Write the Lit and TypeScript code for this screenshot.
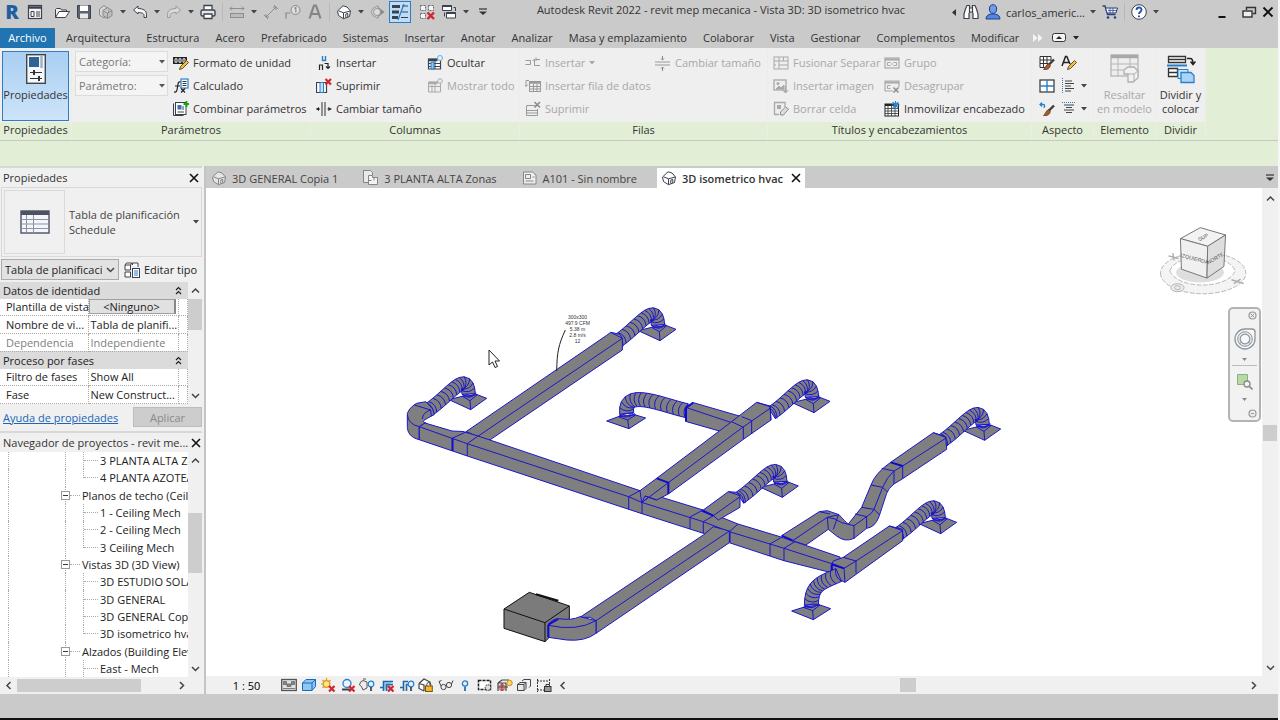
import { LitElement, html, svg, css, nothing } from "lit";
import { customElement } from "lit/decorators.js";
import { classMap } from "lit/directives/class-map.js";

/* ---------- icon set (16 x 16 grid) ---------- */
const K = "#3c424d";
const G = "#a9a9a9";
const B = "#2a7fc9";

const houseIcon = (c: string, f: string) => svg`<path d="M1.5 7 7 1.8l4 1.2 3.5 4-1 5.5-6 2.2-5-3.2z" fill=${f} stroke=${c}/><path d="M2.5 6.8 7.5 8.8 14.2 7M7.5 8.8v5.6M9.8 13.6V10l2-.6v3.6" fill="none" stroke=${c}/>`;
const cross = svg`<path d="m9 9 5.5 5.5M14.5 9 9 14.5" stroke="#d0262c" stroke-width="2.2" fill="none"/>`;
const bulb = svg`<circle cx="12" cy="7" r="2.8" fill="#dff0ff" stroke=${B} stroke-width="1.2"/><path d="M12 10v4" stroke="#333" stroke-width="1.6"/>`;
const brush = svg`<path d="M15 4.5 9.5 10" stroke="#3d3d3d" stroke-width="2.4"/><path d="M9.8 8.6 11.4 10.4C11 13.5 8.5 15 4.5 14.5 6.8 13 6.5 9.5 9.8 8.6z" fill="#a65f2c" stroke="#5d3213" stroke-width=".7"/>`;
const pencil = svg`<path d="m6.5 14.5 1-3 6-6 2 2-6 6z" fill="#f1bd45" stroke="#5a4210" stroke-width=".9"/>`;

const ICONS: Record<string, unknown> = {
  home: svg`<rect x="1.5" y="1.5" width="13" height="13" fill="#f4f4f4" stroke=${K} stroke-width="1.2"/><path d="M1.5 3.500h13" stroke=${K} stroke-width="2.500"/><path d="M4 7.500h3v5H4zM9 8h4M9 10h4M9 12h4" fill="none" stroke=${K}/>`,
  open: svg`<path d="M1.5 13.5v-8l1-1h4l1 1.500h5v2" fill="#f2f2f2" stroke=${K}/><path d="M1.5 13.5 5 7.500h10.500l-4 6z" fill="#fff" stroke=${K}/>`,
  save: svg`<path d="M1.5 1.5h13v13h-12l-1-1z" fill="#5a6270" stroke=${K}/><rect x="4" y="1.5" width="8" height="5.500" fill="#fff"/><rect x="4" y="9.500" width="8" height="5" fill="#e8e8e8"/>`,
  cloud: svg`<path d="M1.500 5 6 1.500 10.500 5v6L6 14 1.500 11z" fill="#d6d6d6" stroke="#8a8a8a"/><path d="M5 6.500 9.500 3.500 14 6.500v5l-4.500 3-4.500-3zM5 6.500l4.500 2.500L14 6.500M9.500 9v5.500" fill="#bdbdbd" stroke="#8a8a8a"/>`,
  undo: svg`<path d="M1.500 6 6 2v2.500c5 0 8.500 2 8.500 6v3h-2.500v-2c0-2-2-3-6-3V10z" fill="#f5f5f5" stroke=${K}/>`,
  redo: svg`<path d="M14.500 6 10 2v2.500c-5 0-8.500 2-8.500 6v3H4v-2c0-2 2-3 6-3V10z" fill="#d9d9d9" stroke="#9a9a9a"/>`,
  print: svg`<path d="M4 6V1.500h8V6" fill="#fff" stroke=${K} stroke-width="1.300"/><rect x="1" y="6" width="14" height="6" rx="1.500" fill="#e6e6e6" stroke=${K} stroke-width="1.400"/><path d="M4 10h8v4.500H4z" fill="#fff" stroke=${K} stroke-width="1.300"/>`,
  measure: svg`<path d="M1 4.500h14M3 2.500l-2 2 2 2M13 2.500l2 2-2 2" fill="none" stroke="#8d8d8d"/><rect x="1.500" y="9.500" width="13" height="4" fill="#bcbcbc" stroke="#8d8d8d"/>`,
  dim: svg`<path d="M3 13 13 3M1 11l4 4M11 1l4 4M3 10v3h3M10 3h3v3" fill="none" stroke="#8f8f8f"/>`,
  tag: svg`<circle cx="10.500" cy="6" r="4.500" fill="#ddd" stroke="#8a8a8a"/><path d="M10.800 8.500v-5L9.500 4.500M1 14.500V9h4.500" fill="none" stroke="#8a8a8a" stroke-width="1.200"/>`,
  text: svg`<path d="M2.500 14.500 7 1.500h2l4.500 13M4.500 10h7" fill="none" stroke="#858585" stroke-width="2.200"/>`,
  house: houseIcon(K, "#fff"),
  houseGray: houseIcon("#858585", "#e6e6e6"),
  section: svg`<path d="M3 4.500 8 1.500v13L3 11.500 1 8z" fill="#d2d2d2" stroke="#9a9a9a"/><path d="M8 3 14.500 8 8 13z" fill="#858585"/><circle cx="7" cy="8" r="3.500" fill="#dcdcdc" stroke="#9a9a9a"/>`,
  thin: svg`<path d="M0 2.500h8M0 8h7M0 13.500h6" stroke=${K} stroke-width="3"/><path d="M10 2h6M9.500 8h6.500M9 13.500h7" stroke=${K} stroke-width="1"/><path d="M12 0 6 16" stroke=${B} stroke-width="1.300"/>`,
  closeHidden: svg`<path d="M1.500 1.500h5v5h-5zM9.500 1.500h5v5h-5zM1.500 9.500h5v5h-5z" fill="#f4f4f4" stroke="#6a6a6a" stroke-dasharray="2 1"/><path d="m8.500 8.500 6.500 6.500M15 8.500 8.500 15" stroke="#d0262c" stroke-width="2.400"/>`,
  switch: svg`<path d="M1.500 1.500h9v5h-9z" fill="#fff" stroke=${K}/><path d="M1.500 2h9" stroke=${K} stroke-width="2"/><path d="M5.500 8.500h9v5.500h-9z" fill="#fff" stroke=${K}/><path d="M5.500 9h9" stroke=${K} stroke-width="2"/><path d="M12.500 3.500h2V7M3.500 8.500v4" fill="none" stroke=${K}/>`,
  binoc: svg`<path d="M2.500 5 4 1.500h2.500V9M13.500 5 12 1.500H9.500V9M6.500 4h3v4h-3z" fill="#fff" stroke=${K} stroke-width="1.200"/><path d="M2.500 5 1 10v4.500h5V9M13.500 5 15 10v4.500h-5V9" fill="#fff" stroke=${K} stroke-width="1.200"/>`,
  user: svg`<ellipse cx="8" cy="5" rx="3.600" ry="4.300" fill="#6e9be6" stroke="#1e3f93"/><path d="M1 15c0-3 2-4.500 5-5h4c3 .5 5 2 5 5z" fill="#5486dd" stroke="#1e3f93"/>`,
  cart: svg`<path d="M.5 2h2.500l2.500 8.500h8" fill="none" stroke="#2c3f7a" stroke-width="1.300"/><path d="M3.500 4h12l-1.500 5H5z" fill="#eef2fb" stroke="#2c3f7a"/><path d="M6 6.500h9M8 4v5M11 4v5" stroke="#2c3f7a" stroke-width=".7"/><circle cx="6" cy="13.500" r="1.300" fill="#2c3f7a"/><circle cx="13" cy="13.500" r="1.300" fill="#2c3f7a"/>`,
  help: svg`<circle cx="8" cy="8" r="7.300" fill="#fff" stroke=${K}/><path d="M5.500 6c0-3.300 5-3.300 5-.3C10.500 8 8 7.800 8 10M8 11.500v1.800" fill="none" stroke="#2450b8" stroke-width="1.900"/>`,
  min: svg`<path d="M4.500 13h7" stroke="#111" stroke-width="2"/>`,
  restore: svg`<path d="M5.500 6V3.500h9v6H12" fill="none" stroke="#333" stroke-width="1.400"/><rect x="2" y="7" width="9" height="6" fill="#eee" stroke="#333" stroke-width="1.400"/>`,
  close: svg`<path d="m4 4 8 8M12 4l-8 8" stroke="#111" stroke-width="1.600"/>`,
  closeWin: svg`<path d="m3.500 3.500 9 9M12.500 3.500l-9 9" stroke="#111" stroke-width="1.900"/>`,
  unit: svg`<rect x="0" y="2" width="14" height="7" fill="#222"/><path d="M2 3.800h2v3.400H2zM6 3.800h2v3.400H6zM10 3.800h2v3.400h-2z" fill="none" stroke="#fff" stroke-width=".9"/>${pencil}`,
  calc: svg`<rect x="8" y="1" width="7" height="9" fill="#fff" stroke=${B} stroke-width="1.200"/><path d="M9.500 3.500h4M9.500 5.500h4M9.500 7.500h4" stroke="#234" stroke-width="1"/><path d="M7.500 4C5 3 5 6 4.500 9c-.5 4-1 5.500-3.500 5M2 8h5M8 10.500l4 4M12 10.500l-4 4" fill="none" stroke="#222" stroke-width="1.200"/>`,
  combine: svg`<path d="M.5 2.500v12h10" fill="none" stroke=${K}/><rect x="2.500" y="1.500" width="10.500" height="12" fill="#fff" stroke=${K}/><rect x="4.500" y="4" width="4" height="4.500" fill="#3d6fae"/><path d="M4.500 11h6.500M10 5v4" stroke=${K}/><path d="M13.500 0v6M10.500 3h6" stroke="#1aa01a" stroke-width="1.800"/>`,
  colIns: svg`<path d="M6.500 1v4.500h3V1" fill="none" stroke=${B} stroke-width="1.400"/><path d="M3.500 15v-5h3v5M8.500 8.500H12V13M10 11.500l2 2 2-2" fill="none" stroke="#222" stroke-width="1.200"/>`,
  colDel: svg`<path d="M.5 4.500h10v10H.5z" fill="#fff" stroke=${K} stroke-width="1.200"/><path d="M4 4.500h3.500v10H4z" fill="#bfe0fa" stroke=${B}/><path d="m9.500 1 5.500 5.500M15 1 9.500 6.500" stroke="#d0262c" stroke-width="2.200"/>`,
  colSize: svg`<path d="M6 1v14M9 1v14" stroke="#444" stroke-width="1.100"/><path d="M0 8h4M15.500 8h-4M3 6.500 1 8l2 1.500M12.500 6.500l2 1.500-2 1.500" stroke="#222" fill="#222"/>`,
  hide: svg`<path d="M1.500 4h12v10h-12z" fill="#fff" stroke=${K} stroke-width="1.200"/><path d="M1.500 5h9" stroke=${K} stroke-width="2.500"/><path d="M1.500 8.500h12M1.500 11.500h12M8 6v8" stroke=${K}/><path d="M4 7h3v7H4z" fill="#8cc3ef" stroke=${B}/><circle cx="13" cy="3" r="2.500" fill="#e4f2fd" stroke="#6aaade"/>`,
  show: svg`<path d="M1.500 4h12v10h-12z" fill="#eee" stroke=${G}/><path d="M1.500 5h9" stroke=${G} stroke-width="2.500"/><path d="M1.500 8.500h12M8 6v8M5 7v7" stroke=${G}/><circle cx="13" cy="3" r="2.300" fill="#eee" stroke=${G}/>`,
  rowIns: svg`<path d="M.5 5.500h5v4h-5M15 4.500h-4v-2M15 10.500H9.500v-6M7.500 6 9.500 4l2 2" fill="none" stroke="#999"/>`,
  rowData: svg`<rect x="4.500" y="3.500" width="11" height="10" fill="#eee" stroke="#999"/><path d="M4.500 4.500h11" stroke="#999" stroke-width="2.500"/><path d="M4.500 8.500h11M4.500 11h11M8.500 6v8M12 6v8M4 2.500H1V8M-.5 6.500 1 8.500l2-2" fill="none" stroke="#999"/>`,
  rowDel: svg`<path d="M1.500 4.500h9M1.500 4.500v10h11V8M1.500 9.500h11M1.500 12h11" fill="none" stroke="#999"/><path d="m9.500 1 5.500 5.500M15 1 9.500 6.500" stroke="#8a8a8a" stroke-width="1.600"/>`,
  rowSize: svg`<path d="M0 7h15M0 10h15" stroke="#999" stroke-width="1.200"/><path d="M7.500 1v4M7.500 16v-4M6 3.500 7.500 5 9 3.500M6 13.500l1.500-1.500 1.500 1.500" stroke="#888" fill="none"/>`,
  merge: svg`<rect x="1" y="2" width="14" height="12" fill="#eee" stroke=${G}/><path d="M1 6h14M6 2v12M6 10h9M10.500 2v4M1 10h2" stroke=${G} fill="none"/>`,
  image: svg`<rect x="1" y="2" width="12" height="10" fill="#eee" stroke=${G} stroke-width="1.300"/><circle cx="5" cy="5.500" r="1.500" fill=${G}/><path d="m3 11 3-3 2 2 3-3v4zM12.500 8v6.500M10 12.500l2.500 2.500 2.500-2.500" fill=${G} stroke=${G}/>`,
  erase: svg`<path d="M12 6V1.500H1.500v12H6" fill="#eee" stroke=${G} stroke-width="1.300"/><path d="M4 4h4v4H4z" fill=${G}/><path d="m7.500 11 5-5 3 2-5 6H7.500z" fill="#ddd" stroke="#8e8e8e"/>`,
  group: svg`<rect x="1" y="3" width="14" height="10" fill="#eee" stroke=${G} stroke-width="1.200"/><path d="M1 4.500h14" stroke=${G} stroke-width="2"/><path d="M6.500 7.500h-3v3h3M9.500 7.500h3v3h-3M7 9h2" fill="none" stroke=${G}/>`,
  ungroup: svg`<path d="M9 13H1V3h14v6" fill="#eee" stroke=${G} stroke-width="1.200"/><path d="M1 4.500h14" stroke=${G} stroke-width="2"/><path d="M6.500 7.500h-3v3h3" fill="none" stroke=${G}/><path d="m9.500 9.500 5 5M14.500 9.500l-5 5" stroke="#8e8e8e" stroke-width="1.600"/>`,
  freeze: svg`<rect x="1" y="3" width="13.500" height="12" fill="#fff" stroke="#222"/><path d="M1 4h9" stroke="#222" stroke-width="2"/><path d="M1 7.500h13M1 10h13M1 12.500h13M4 5v10M7.500 5v10M11 5v10" stroke="#444" stroke-width=".9"/><path d="M11.500 0v8M7.500 4h8M8.700 1.200l5.600 5.600M14.300 1.200 8.700 6.800" stroke=${B} stroke-width="1.200"/>`,
  shade: svg`<path d="M12 6V1.500H1v11h5" fill="#fff" stroke="#333"/><path d="M1 5h11M1 8.500h8M4.500 1.500v11M8 1.500V9" stroke="#333"/>${brush}`,
  font: svg`<path d="M1 11 4.500 1.500h1.300L9 9M2.500 7.500h5.500" fill="none" stroke="#222" stroke-width="1.500"/>${pencil}`,
  borders: svg`<rect x="1" y="2" width="14" height="12" fill="#fff" stroke="#333" stroke-width="1.200"/><path d="M8 2v12M1 8h14" stroke=${B} stroke-width="1.400"/>`,
  alignH: svg`<path d="M1.500 0v16" stroke=${B} stroke-dasharray="1 1"/><path d="M4 3h7M4 5.500h9M4 8h6M4 10.500h9M4 13h6" stroke="#444"/>`,
  alignV: svg`<path d="M1 1.500h14" stroke=${B} stroke-dasharray="1 1"/><path d="M3 4h10M5 6.500h6M3 9h10M5 11.500h6" stroke="#444"/>`,
  reset: svg`<path d="M1 3.500h3.500c1.500 0 1.500 3 0 3M3 1.500 1 3.500l2 2" fill="none" stroke=${B} stroke-width="1.300"/>${brush}`,
  editType: svg`<path d="M1 3h5.500v5H1zM1 10h5.500v5H1zM8.500 3V1H14v4M1 3l1.500-2H8l-1.500 2" fill="#fff" stroke=${K}/><rect x="8.500" y="6.500" width="7" height="9" fill="#fff" stroke=${K}/><path d="M10 9h4M10 11h4M10 13h4" stroke=${B}/>`,
  plan: svg`<path d="M5 12.500H.5v-12h7l2 2V5" fill="#e9e9e9" stroke="#858585"/><path d="M5.500 5.500h4v2h5v7h-9z" fill="#f3f3f3" stroke="#858585"/><path d="M5.500 10.500h3M11 7.500v3" stroke="#858585"/>`,
  sheet: svg`<path d="M1.500 2h9l3.500 3v9H1.500z" fill="#efefef" stroke="#858585"/><path d="M3.500 4.500h5v4h-5zM3.500 11h8M10.500 7h2" fill="none" stroke="#858585"/>`,
  scaleBox: svg`<rect x=".7" y="2.500" width="14.600" height="11" fill="#e2e2e2" stroke="#555" stroke-width="1.300"/><path d="M2.500 4.500h3v3h-3zM10.500 4.500h3v3h-3zM6 7h4v2.500H6zM2 11.500h12" fill="#888" stroke="#666" stroke-width=".8"/>`,
  cube: svg`<path d="M1.500 6 5 2.500h9.500v7L11 13.500H1.500z" fill="#8cc8f5" stroke="#1c69b5"/><path d="M1.500 6H11v7.500M11 6l3.500-3.500" fill="none" stroke="#1c69b5"/>`,
  sun: svg`<circle cx="6.500" cy="7" r="3.300" fill="#ffe28a" stroke="#d99a15" stroke-width="1.300"/><path d="M6.500 1v2M1 7h2M2.500 3l1.300 1.300M10.500 3 9.300 4.300M2.500 11l1.300-1.300" stroke="#d99a15" stroke-width="1.200"/>${cross}`,
  shadow: svg`<circle cx="7" cy="6.500" r="4" fill="#e9f4ff" stroke=${B} stroke-width="1.300"/><path d="M2 12.500h8" stroke="#345" stroke-width="2"/>${cross}`,
  render: svg`<path d="M1.500 5 4 3.500 8 5v6l-4 2-1.500-3.500L.5 8z" fill="#eee" stroke="#555"/><path d="M4 2h3" stroke="#555"/>${bulb}`,
  crop: svg`<path d="M4.500 14V4.500H14M1 10.500h3M7.500 14V7.500H14" fill="#a9d4f5" stroke="#2367a8" stroke-width="1.600"/>${cross}`,
  cropShow: svg`<path d="M4.500 14V4.500H9M1 10.500h3M7.500 14V7.500H9" fill="none" stroke="#2367a8" stroke-width="1.600"/>${bulb}`,
  lock: svg`<path d="M1 6.500 6 2l6 3v3M1 6.500v5l5 2.500M1 6.500l5 1.500v6" fill="#fff" stroke="#444" stroke-width="1.200"/><path d="M8.800 9V7.500a2 2 0 0 1 4 0V9" fill="none" stroke="#444"/><rect x="7.500" y="9" width="6.800" height="5.500" fill="#f4b62a" stroke="#7a5510"/>`,
  glasses: svg`<circle cx="5.500" cy="10" r="2.600" fill="#eee" stroke="#444"/><circle cx="11" cy="8" r="2.600" fill="#eee" stroke="#444"/><path d="M3 9 1 4.500l2.500-1M13.500 7 15 3.500" fill="none" stroke="#444"/>`,
  reveal: svg`<circle cx="8" cy="6.500" r="2.600" fill="#dff0ff" stroke=${B} stroke-width="1.300"/><path d="M8 9.500V14" stroke="#2e6bb0" stroke-width="1.800"/>`,
  temp: svg`<path d="M1.500 3.500h12v9h-12z" fill="#fff" stroke="#222" stroke-width="1.500" stroke-dasharray="3 1"/><circle cx="11" cy="10.500" r="2.800" fill="#ddd" stroke="#222" stroke-dasharray="1.500 1"/>`,
  analytic: svg`<path d="M1 6 5 3h7M1 6v8M1 10h10M5 6v8M9 6v8M1 6h8" fill="none" stroke="#444" stroke-width="1.200"/><path d="M3 8h4v5H3z" fill="none" stroke="#d0262c"/><circle cx="12.500" cy="6" r="2.700" fill="#ffd86b" stroke="#c98a12"/>`,
  displace: svg`<path d="M1.500 7.500 4 5.500h6v6L8 13.500H1.500zM1.500 7.500H8v6M8 7.500l2-2" fill="#e8e8e8" stroke="#444"/><path d="M6 4 8 2.500h6.500V9L13 10.500" fill="none" stroke="#444"/>`,
  constraint: svg`<path d="M1.500 2v13M1 4h12M13.500 2v5M1 13h7" fill="none" stroke="#333" stroke-dasharray="2 1"/><rect x="8.500" y="9.500" width="6.500" height="5" fill="#999" stroke="#333"/><path d="M10 9V7.500h3.500V9" fill="none" stroke="#333"/>`,
};

const icon = (name: string) => html`<svg class="ic" viewBox="0 0 16 16" width="16" height="16" aria-hidden="true">${ICONS[name]}</svg>`;
const caret = html`<svg class="caret" viewBox="0 0 6 4" width="6" height="4" aria-hidden="true"><path d="M0 0h6L3 3.500z" fill="currentColor"/></svg>`;
const CHEV: Record<string, string> = { up: "M1 6.500 4.500 3 8 6.500", down: "M1 3l3.500 3.500L8 3", left: "M6.500 1 3 4.500 6.500 8", right: "M3 1l3.500 3.500L3 8" };
const chev = (d: string) => html`<svg viewBox="0 0 9 9" width="9" height="9" aria-hidden="true"><path d=${CHEV[d]} fill="none" stroke="#444" stroke-width="1.500"/></svg>`;

/* ---------- duct geometry ---------- */
type Pt = [number, number];

/* Corrugated duct swept along a cubic curve. */
function flexDuct(p: [Pt, Pt, Pt, Pt], r: number, rings: number) {
  const left: Pt[] = [];
  const right: Pt[] = [];
  let ribs = "";
  for (let i = 0; i <= rings; i++) {
    const t = i / rings;
    const u = 1 - t;
    const at = (k: 0 | 1) => u * u * u * p[0][k] + 3 * u * u * t * p[1][k] + 3 * u * t * t * p[2][k] + t * t * t * p[3][k];
    const d = (k: 0 | 1) => 3 * u * u * (p[1][k] - p[0][k]) + 6 * u * t * (p[2][k] - p[1][k]) + 3 * t * t * (p[3][k] - p[2][k]);
    const len = Math.hypot(d(0), d(1));
    const tx = d(0) / len, ty = d(1) / len;
    const x = at(0), y = at(1);
    const a: Pt = [x - ty * r, y + tx * r];
    const b: Pt = [x + ty * r, y - tx * r];
    left.push(a);
    right.push(b);
    ribs += `M${a}Q${[x + tx * r * 0.7, y + ty * r * 0.7]} ${b}`;
  }
  return svg`<path class="duct" d=${"M" + [...left, ...right.reverse()].join("L") + "Z"}></path><path class="edge" d=${ribs}></path>`;
}

const diffuser = (l: Pt, b: Pt, r: Pt, a: Pt, m: Pt, c: Pt) => svg`
  <path class="duct" d=${`M${l}L${b}L${r}L${c}L${a}Z`}></path>
  <path class="edge" d=${`M${a}L${m}L${c}M${m}L${b}M${a}Q${[m[0], m[1] - 26]} ${c}M${[a[0] + 2, a[1] - 5]}Q${m} ${[c[0] - 3, c[1] - 5]}`}></path>`;

/* Flexible take-off with its ceiling diffuser; repeated on six branches. */
const takeoff = () => svg`
  ${diffuser([745, 107], [810, 137], [858, 103], [785, 97], [808, 110], [830, 92])}
  ${flexDuct([[683, 138], [745, 97], [800, 12], [804, 90]], 20, 14)}
  <path class="edge" d="M678 116Q700 128 699 154"></path>`;

const TAKEOFFS: Pt[] = [[0, 0], [-568, 207], [462, 216], [367, 470], [974, 299], [842, 579]];

const ductwork = () => svg`
  <g transform="translate(390 295) scale(.33333)">
    ${TAKEOFFS.map((t) => svg`<g transform=${`translate(${t})`}>${takeoff()}</g>`)}
    <path class="duct" d="M228 410 650 121 662 112 690 118 697 130V165L298 436 262 425Z"/>
    <path class="edge" d="M262 425 697 130M228 410 262 425M662 112 697 130"/>
    <path class="duct" d="M88 434C60 428 52 410 52 395V355C58 340 68 332 80 325L108 320 128 342 133 358 105 374Q95 380 107 384L88 395Z"/>
    <path class="edge" d="M88 434V395Q55 388 52 360M88 395 107 384M73 330 122 345 124 364M122 345Q98 352 97 372"/>
  </g>
  <path class="duct" d="M425 423 452 431 463 431.500 478 436 640 490.700 703 510 738 524 780 536.700 840 557 842 572 832.700 573 784 560.700 729.300 542.700 703.300 533.300 642 513.700 467.300 456 419.300 439.700V426.700Z"/>
  <path class="edge" d="M419.300 426.700 452 438.300 467.300 443.700 628.700 496.700 642 502.500 703.300 521.700 729.300 531.700 770 544 784 548.300 832.700 564M467.300 443.700V456M628.700 496.700V509.500M642 502.500V513.700M690 517V529M703.300 521.700V533.300M770 544V556M784 548.300V560.700M452 438.300 466 432M467.300 443.700 478 436M628.700 496.700 640 490.700M642 502.500 652 494M690 517 703 510M703.300 521.700 718 513M729.300 531.700 738 524M770 544 782 537M784 548.300 796 541"/>
  <path class="heavy" d="M452.500 438.500V451M729.500 532V542"/>
  <g transform="translate(590 370) scale(.33333)">
    ${flexDuct([[290, 122], [215, 105], [100, 52], [110, 130]], 21, 14)}
    ${diffuser([50, 153], [117, 176], [167, 144], [85, 140], [113, 150], [137, 135])}
    <path class="duct" d="M310 98 455 140 425 158 395 185 290 155 286 115Z"/>
    <path class="edge" d="M290 113 425 158"/>
    <path class="heavy" d="M310 98 288 113V155"/>
    <path class="duct" d="M150 362 200 325 425 155 500 97 540 108 543 150 460 208 235 372 200 390 165 378 155 398Z"/>
    <path class="edge" d="M155 398 235 338 458 172 543 113M460 172V208M485 152V192M425 155 460 172M455 140 485 152M165 378 200 390M500 97 540 110 543 150"/>
    <path class="heavy" d="M200 325 235 338V372"/>
    <path class="duct" d="M340 420 415 365 440 367 450 377V412L385 450 370 437Z"/>
    <path class="edge" d="M370 437 450 380M415 365 450 377"/>
    <path class="heavy" d="M335 422 370 437"/>
  </g>
  <g transform="translate(490 500) scale(.33333)">
    <path class="duct" d="M270 352 640 105 670 80 718 93V128L318 400V362L300 352Z"/>
    <path class="edge" d="M318 362 718 93"/>
    <path class="unit" d="M42 327 118 277 238 318 238 365 175 415 165 425 42 385Z"/>
    <path class="unit" d="M42 327 165 368 238 318M165 368V425"/>
    <path class="unitHeavy" d="M138 283 205 302"/>
    <path class="duct" d="M175 374Q185 358 205 356 245 362 270 350L318 362V400Q285 425 230 420L175 412Z"/>
    <path class="edge" d="M175 376Q260 395 318 362"/>
    <path class="heavy" d="M175 374V412M175 374 205 357"/>
  </g>
  <g transform="translate(770 390) scale(.33333)">
    <path class="duct" d="M35 437 148 365 172 362 207 374Q225 395 235 402L275 352 303 285Q315 250 362 217L490 128 527 140 530 178 398 266 372 282Q355 295 350 310L327 380Q315 412 290 415L252 445Q225 458 200 438L175 418 108 465 68 452Z"/>
    <path class="edge" d="M68 452 172 382 207 374M148 365 180 372M172 382 175 418M172 382Q196 384 215 398L252 407 290 380Q305 372 312 358L338 292Q350 262 372 243L398 228 530 143M205 375 190 418M252 407V447M290 380V415M255 372 290 380M275 352 312 358 328 374M303 285 338 292 352 306M335 235 372 243V282M362 217 398 228V266M490 128 527 142"/>
    <path class="heavy" d="M35 437 68 452M362 217 398 228"/>
    <path class="duct" d="M185 522 190 513 220 502 358 408 398 418V452L225 577 190 560Z"/>
    <path class="edge" d="M185 525 222 535 225 577M222 535 258 513 398 422M258 513V550M220 502 258 513M358 408 398 422"/>
    <path class="heavy" d="M185 522 222 535M185 525V545"/>
    ${flexDuct([[206, 555], [150, 580], [125, 585], [124, 645]], 21, 10)}
    ${diffuser([65, 663], [130, 689], [182, 656], [100, 652], [128, 662], [150, 645])}
  </g>
  <path class="leader" d="M565.300 330C558.500 345 557 352 556.700 371"/>
  <g class="note">
    <text x="577.500" y="319">300x300</text>
    <text x="577.500" y="325">497.9 CFM</text>
    <text x="577.500" y="331">5.38 m</text>
    <text x="577.500" y="337">2.8 m/s</text>
    <text x="577.500" y="343">12</text>
  </g>
  <path class="pointer" d="M489 350V365L492.500 362 495 367.500 497.500 366.500 495 361H499.500Z"/>`;

/* ---------- data ---------- */
const MENU = ["Arquitectura", "Estructura", "Acero", "Prefabricado", "Sistemas", "Insertar", "Anotar", "Analizar", "Masa y emplazamiento", "Colaborar", "Vista", "Gestionar", "Complementos", "Modificar"];
const QAT = ["home", "gap", "open", "save", "cloud", "caret", "undo", "caret", "redo", "caret", "print", "sep", "measure", "caret", "dim", "tag", "text", "sep", "house", "caret", "section", "thin", "gap", "closeHidden", "switch", "caret", "more"];

type Action = { i: string; t: string; off?: boolean; menu?: boolean };
type Panel = { id: string; title: string; cols: Action[][] };
const PANELS: Panel[] = [
  { id: "columns", title: "Columnas", cols: [
    [{ i: "colIns", t: "Insertar" }, { i: "colDel", t: "Suprimir" }, { i: "colSize", t: "Cambiar tamaño" }],
    [{ i: "hide", t: "Ocultar" }, { i: "show", t: "Mostrar todo", off: true }]] },
  { id: "rows", title: "Filas", cols: [
    [{ i: "rowIns", t: "Insertar", off: true, menu: true }, { i: "rowData", t: "Insertar fila de datos", off: true }, { i: "rowDel", t: "Suprimir", off: true }],
    [{ i: "rowSize", t: "Cambiar tamaño", off: true }]] },
  { id: "titles", title: "Títulos y encabezamientos", cols: [
    [{ i: "merge", t: "Fusionar Separar", off: true }, { i: "image", t: "Insertar imagen", off: true }, { i: "erase", t: "Borrar celda", off: true }],
    [{ i: "group", t: "Grupo", off: true }, { i: "ungroup", t: "Desagrupar", off: true }, { i: "freeze", t: "Inmovilizar encabezado" }]] },
];

const PROPS: Array<[string, string?, string?]> = [
  ["Datos de identidad"],
  ["Plantilla de vista", "<Ninguno>", "button"],
  ["Nombre de vi...", "Tabla de planifi...", "text"],
  ["Dependencia", "Independiente", "off"],
  ["Proceso por fases"],
  ["Filtro de fases", "Show All", "text"],
  ["Fase", "New Construct...", "text"],
];

const TREE: Array<{ t: string; node?: boolean; last?: boolean }> = [
  { t: "3 PLANTA ALTA Zonas" }, { t: "4 PLANTA AZOTEA", last: true },
  { t: "Planos de techo (Ceiling Plan)", node: true },
  { t: "1 - Ceiling Mech" }, { t: "2 - Ceiling Mech" }, { t: "3 Ceiling Mech", last: true },
  { t: "Vistas 3D (3D View)", node: true },
  { t: "3D ESTUDIO SOLAR" }, { t: "3D GENERAL" }, { t: "3D GENERAL Copia 1" }, { t: "3D isometrico hvac", last: true },
  { t: "Alzados (Building Elevation)", node: true },
  { t: "East - Mech" },
];

const VIEW_TOOLS = ["scaleBox", "cube", "sun", "shadow", "render", "crop", "cropShow", "lock", "glasses", "reveal", "temp", "analytic", "displace", "constraint"];

const reset = css`
  :host, * { box-sizing: border-box; }
  button, select, input { font: inherit; color: inherit; margin: 0; }
  button { background: none; border: 0; padding: 0; display: flex; align-items: center; }
  svg { display: block; flex: none; }
  h1, h2 { margin: 0; font: inherit; }
`;

@customElement("title-bar")
export class TitleBar extends LitElement {
  static styles = [reset, css`
    :host { display: flex; align-items: center; height: 24px; background: #cacaca; }
    .tool { width: 22px; height: 22px; justify-content: center; }
    .brand { width: 24px; font-size: 20px; line-height: 24px; font-weight: 800; color: #1f5f9f; text-align: center; }
    .drop { width: 12px; height: 22px; justify-content: center; color: #444; }
    .active { background: #bfdcf7; border: 1px solid #2d7cc4; }
    .gap { width: 5px; }
    .sep { width: 1px; height: 18px; margin: 0 3px; background: #b8b8b8; }
    .title { flex: 1; text-align: center; line-height: 20px; align-self: flex-start; white-space: nowrap; overflow: hidden; color: #333; }
    .account { display: flex; align-items: center; color: #333; }
    .name { padding: 0 2px; }
    .window { display: flex; margin-left: 52px; gap: 3px; padding-right: 2px; }
    .window .spaced { margin-right: 8px; }
    .window .tool { width: 16px; }
  `];
  tool(n: string) {
    if (n === "gap") return html`<span class="gap"></span>`;
    if (n === "sep") return html`<span class="sep"></span>`;
    if (n === "caret") return html`<button class="drop" aria-label="Más opciones">${caret}</button>`;
    if (n === "more") return html`<button class="tool" aria-label="Personalizar"><svg width="8" height="8" viewBox="0 0 8 8"><path d="M0 1h8" stroke="#333" stroke-width="1.200"/><path d="M0 3.500h8l-4 3.500z" fill="#333"/></svg></button>`;
    return html`<button class=${classMap({ tool: true, active: n === "thin" })} aria-label=${n}>${icon(n)}</button>`;
  }
  render() {
    return html`
      <span class="brand">R</span>
      ${QAT.map((n) => this.tool(n))}
      <h1 class="title">Autodesk Revit 2022 - revit mep mecanica - Vista 3D: 3D isometrico hvac</h1>
      <div class="account">
        <button class="drop" aria-label="Contraer"><svg width="4" height="7" viewBox="0 0 4 7"><path d="M4 0v7L0 3.500z" fill="#333"/></svg></button>
        <button class="tool" aria-label="Buscar">${icon("binoc")}</button>
        <button class="tool" aria-label="Usuario">${icon("user")}</button>
        <button class="name">carlos_americ...</button>
        ${this.tool("caret")}
        <button class="tool" aria-label="Tienda">${icon("cart")}</button>
        <span class="sep"></span>
        <button class="tool" aria-label="Ayuda">${icon("help")}</button>
        ${this.tool("caret")}
      </div>
      <div class="window">
        <button class="tool spaced" aria-label="Minimizar">${icon("min")}</button>
        <button class="tool" aria-label="Restaurar">${icon("restore")}</button>
        <button class="tool" aria-label="Cerrar">${icon("closeWin")}</button>
      </div>`;
  }
}

@customElement("ribbon-bar")
export class RibbonBar extends LitElement {
  static styles = [reset, css`
    :host { display: block; background: #e2efd6; }
    .tabs { display: flex; align-items: stretch; height: 24px; padding-top: 4px; background: #cacaca; }
    .tab { padding: 0 8px 1px; white-space: nowrap; color: #333; }
    .file { width: 55px; padding: 0 0 1px; justify-content: center; margin-right: 3px; background: #1f74b1; color: #fff; }
    .more { display: flex; align-items: center; gap: 4px; margin-left: 6px; color: #222; }
    .panels { display: flex; height: 93px; border-bottom: 1px solid #c3cbc0; }
    .panel { display: flex; flex-direction: column; border-right: 1px solid #ebede6; }
    .body { flex: 1; display: flex; background: #efefef; padding-top: 3px; }
    .label { height: 18px; line-height: 16px; text-align: center; color: #333; }
    .properties { width: 72px; }
    .parameters { width: 239px; }
    .columns { width: 209px; }
    .rows { width: 248px; }
    .titles { width: 264px; }
    .look { width: 62px; }
    .element { width: 62px; }
    .split { width: 50px; }
    .columns .body, .rows .body, .titles .body { padding-left: 5px; }
    .columns .stack:first-child, .titles .stack:first-child { width: 111px; }
    .rows .stack:first-child { width: 130px; }
    .big { flex-direction: column; width: 100%; gap: 4px; line-height: 14px; text-align: center; padding-top: 1px; color: #333; }
    .pressed { width: 67px; height: 70px; margin: 0 2px; padding-top: 2px; background: linear-gradient(#a9cff3, #cde4f9); border: 1px solid #2d7cc4; }
    .stack { display: flex; flex-direction: column; }
    .action { height: 23px; gap: 4px; white-space: nowrap; color: #333; }
    .off { color: #a8a8a8; }
    .fields { display: grid; gap: 3px; align-content: start; padding: 0 5px 0 3px; }
    .field { display: grid; align-items: center; }
    .field > * { grid-area: 1 / 1; }
    .field svg { justify-self: end; margin-right: 3px; color: #555; pointer-events: none; }
    .field select { appearance: none; width: 93px; height: 21px; padding: 0 3px; border: 1px solid #dcdcdc; background: #f4f4f4; color: #777; border-radius: 0; }
    .looks { display: grid; grid-template-columns: 22px 20px 10px; grid-auto-rows: 23px; align-items: center; padding-left: 7px; align-content: start; color: #444; }
    .strip { height: 25px; }
  `];
  action(a: Action) {
    return html`<button class=${classMap({ action: true, off: !!a.off })}>${icon(a.i)}<span>${a.t}</span>${a.menu ? caret : nothing}</button>`;
  }
  render() {
    return html`
      <nav class="tabs">
        <button class="tab file">Archivo</button>
        ${MENU.map((m) => html`<button class="tab">${m}</button>`)}
        <span class="more">
          <svg width="10" height="8" viewBox="0 0 10 8"><path d="M0 0l4.500 4L0 8zM5 0l4.500 4L5 8z" fill="#f4f4f4"/></svg>
          <svg width="22" height="10" viewBox="0 0 22 10"><rect x="5.500" y=".5" width="13" height="8" rx="2" fill="#f4f4f4" stroke="#333"/><path d="M9 6h6l-3-3z" fill="#222"/></svg>
          ${caret}
        </span>
      </nav>
      <div class="panels">
        <section class="panel properties">
          <div class="body"><button class="big pressed">
            <svg width="20" height="30" viewBox="0 0 20 30"><rect x=".7" y=".7" width="18.600" height="28.600" fill="#f4f8fc" stroke="#444" stroke-width="1.400"/><rect x="3" y="3" width="10" height="10" fill="#2f6394"/><path d="M15.500 2v12" stroke="#9db4c8" stroke-width="2.500"/><path d="M4 18.500h12M4 24.500h12" stroke="#333"/><path d="M8 16v5M13 22v5" stroke="#333" stroke-width="2"/></svg>
            Propiedades</button></div>
          <h2 class="label">Propiedades</h2>
        </section>
        <section class="panel parameters">
          <div class="body">
            <div class="fields">
              ${["Categoría:", "Parámetro:"].map((f) => html`<label class="field"><select aria-label=${f}><option>${f}</option></select>${caret}</label>`)}
            </div>
            <div class="stack">${[{ i: "unit", t: "Formato de unidad" }, { i: "calc", t: "Calculado" }, { i: "combine", t: "Combinar parámetros" }].map((a) => this.action(a))}</div>
          </div>
          <h2 class="label">Parámetros</h2>
        </section>
        ${PANELS.map((p) => html`<section class="panel ${p.id}">
          <div class="body">${p.cols.map((c) => html`<div class="stack">${c.map((a) => this.action(a))}</div>`)}</div>
          <h2 class="label">${p.title}</h2>
        </section>`)}
        <section class="panel look">
          <div class="body looks">
            <button aria-label="Sombreado">${icon("shade")}</button><button aria-label="Fuente">${icon("font")}</button><span></span>
            <button aria-label="Bordes">${icon("borders")}</button><button aria-label="Alinear">${icon("alignH")}</button><button aria-label="Opciones">${caret}</button>
            <button aria-label="Restablecer">${icon("reset")}</button><button aria-label="Alinear vertical">${icon("alignV")}</button><button aria-label="Opciones">${caret}</button>
          </div>
          <h2 class="label">Aspecto</h2>
        </section>
        <section class="panel element">
          <div class="body"><button class="big off">
            <svg width="30" height="32" viewBox="0 0 30 32"><rect x="1" y="3" width="27" height="21" fill="#eee" stroke="#b5b5b5" stroke-width="1.300"/><path d="M1 4.500h27" stroke="#a8a8a8" stroke-width="3.500"/><path d="M1 12h27M1 18h27M8 6v18M20 6v18" stroke="#b5b5b5"/><path d="m14 18 4-3h6l4 4v7l-5 4h-5v-8h-4z" fill="#f1f1f1" stroke="#b0b0b0" stroke-width="1.300"/><path d="M18 22h6l4-3M24 22v8" fill="none" stroke="#b0b0b0"/></svg>
            <span>Resaltar<br>en modelo</span></button></div>
          <h2 class="label">Elemento</h2>
        </section>
        <section class="panel split">
          <div class="body"><button class="big">
            <svg width="30" height="32" viewBox="0 0 30 32"><path d="M2.500 4.500h17v6h-17zM2.500 7.500h17M2.500 16.500h9v8h-9zM2.500 20.500h9" fill="#fff" stroke="#333" stroke-width="1.300"/><path d="M1 13.500h20" stroke=${B} stroke-width="2"/><path d="M21 6.500h3q3 0 3 5M24.500 9.500l2.500 3 2.500-3" fill="none" stroke="#222" stroke-width="1.500"/><path d="M12 17.500h10v9H12z" fill="#cfe7fa" stroke=${B}/><path d="M15 20.500h10l3 3v7H15z" fill="#a9d4f6" stroke=${B} stroke-width="1.300"/></svg>
            <span>Dividir y<br>colocar</span></button></div>
          <h2 class="label">Dividir</h2>
        </section>
      </div>
      <div class="strip"></div>`;
  }
}

@customElement("side-palettes")
export class SidePalettes extends LitElement {
  static styles = [reset, css`
    :host { display: flex; flex-direction: column; flex: none; width: 206px; min-height: 0; background: #f0f0f0; border-right: 2px solid #c4c4c4; padding-right: 2px; color: #222; }
    .head { display: flex; align-items: center; justify-content: space-between; height: 21px; padding-left: 3px; border-top: 2px solid #d8d8d8; white-space: nowrap; flex: none; color: #333; }
    .type { display: flex; align-items: center; gap: 4px; height: 70px; margin-left: 1px; padding: 2px; border: 1px solid #d9d9d9; line-height: 15px; flex: none; color: #444; }
    .thumb { display: grid; place-items: center; width: 61px; height: 64px; border: 1px solid #dadada; }
    .grow { flex: 1; }
    .pick { display: flex; align-items: center; gap: 5px; height: 25px; padding-left: 1px; flex: none; }
    .pick label { display: grid; align-items: center; width: 118px; }
    .pick label > * { grid-area: 1 / 1; }
    .pick label svg { justify-self: end; margin-right: 4px; pointer-events: none; }
    .pick select { appearance: none; width: 118px; height: 21px; border: 1px solid #ababab; border-radius: 0; background: #e2e2e2; padding: 0 16px 0 3px; text-overflow: clip; }
    .edit { gap: 4px; white-space: nowrap; }
    .scroll { display: flex; flex-direction: column; align-items: center; justify-content: space-between; width: 14px; padding: 4px 0; background: #f0f0f0; flex: none; }
    .thumbV { width: 14px; background: #cdcdcd; }
    .grid { display: flex; height: 122px; flex: none; }
    table { flex: none; height: 122px; border-collapse: collapse; table-layout: fixed; width: 188px; background: #fff; }
    .c1 { width: 88px; }
    .c2 { width: 90px; }
    th, td { padding: 0; text-align: left; font-weight: 400; white-space: nowrap; line-height: 15px; border-bottom: 1px dotted #aaa; border-right: 1px dotted #aaa; }
    .group { background: #dbdbdb; padding: 0 6px 0 3px; border: 0; }
    .group div { display: flex; justify-content: space-between; align-items: center; }
    .key { padding-left: 6px; }
    .val { padding-left: 2px; }
    .dim { color: #808080; }
    .none { width: 87px; height: 15px; justify-content: center; background: #e1e1e1; border: 1px solid #a0a0a0; border-right: 2px solid #888; }
    .foot { display: flex; align-items: center; justify-content: space-between; height: 26px; padding-left: 3px; flex: none; }
    .foot a { color: #1a66b8; }
    .apply { width: 69px; height: 20px; justify-content: center; background: #cdcdcd; border: 1px solid #bcbcbc; color: #8a8a8a; }
    .browser { margin-top: 1px; }
    .tree { display: flex; flex: 1; min-height: 0; }
    ul { flex: 1; min-width: 0; margin: 0; padding: 0; list-style: none; display: grid; grid-auto-rows: 1fr; background: #fff; overflow: hidden; }
    li { display: flex; align-items: center; white-space: nowrap; min-height: 0; line-height: 15px; overflow: hidden; }
    .rail { align-self: stretch; border-right: 1px dotted #aaa; flex: none; }
    .r1 { width: 9px; }
    .r2 { width: 57px; }
    .r3 { width: 18px; }
    .half { align-self: flex-start; height: 9px; }
    .dash { width: 14px; border-top: 1px dotted #aaa; margin-right: 2px; flex: none; }
    .node { width: 9px; height: 9px; margin-left: -5px; justify-content: center; background: #fff; border: 1px solid #999; flex: none; z-index: 1; }
    .node::before { content: ""; width: 5px; height: 1px; background: #335; }
    .node + .dash { width: 10px; }
    .hbar { display: flex; align-items: center; justify-content: space-between; height: 17px; padding: 0 16px 0 4px; flex: none; }
    .thumbH { width: 124px; height: 13px; margin-right: 33px; background: #cdcdcd; }
    .v1 { height: 31px; margin-bottom: 58px; }
    .v2 { height: 60px; margin-bottom: 44px; }
  `];
  row([k, v, kind]: [string, string?, string?]) {
    if (!kind) return html`<tr><th class="group" colspan="3"><div>${k}<svg width="7" height="9" viewBox="0 0 7 9"><path d="M1 4 3.500 1.500 6 4M1 8l2.500-2.500L6 8" fill="none" stroke="#222" stroke-width="1.200"/></svg></div></th></tr>`;
    return html`<tr><th class=${classMap({ key: true, dim: kind === "off" })}>${k}</th>
      <td class=${classMap({ val: kind !== "button", dim: kind === "off" })}>${kind === "button" ? html`<button class="none">${v}</button>` : v}</td><td></td></tr>`;
  }
  render() {
    return html`
      <div class="head"><h2>Propiedades</h2><button aria-label="Cerrar">${icon("close")}</button></div>
      <div class="type">
        <span class="thumb"><svg width="30" height="24" viewBox="0 0 30 24"><rect x="1" y="1" width="28" height="22" fill="#f4f6fa" stroke="#4c5261" stroke-width="1.400"/><path d="M1 3h28" stroke="#4c5261" stroke-width="4"/><path d="M1 9.500h28M1 14h28M1 18.500h28M6.500 5v18M13.500 5v18" stroke="#8a93a8"/></svg></span>
        <span>Tabla de planificación<br>Schedule</span><span class="grow"></span>${caret}
      </div>
      <div class="pick">
        <label><select aria-label="Tipo"><option>Tabla de planificación</option></select>${chev("down")}</label>
        <button class="edit">${icon("editType")}Editar tipo</button>
      </div>
      <div class="grid">
        <table>
          <colgroup><col class="c1"><col class="c2"><col></colgroup>
          <tbody>${PROPS.map((p) => this.row(p))}</tbody>
        </table>
        <div class="scroll">${chev("up")}<span class="thumbV v1"></span>${chev("down")}</div>
      </div>
      <div class="foot"><a href="#">Ayuda de propiedades</a><button class="apply">Aplicar</button></div>
      <div class="head browser"><h2>Navegador de proyectos - revit me...</h2><button aria-label="Cerrar">${icon("close")}</button></div>
      <div class="tree">
        <ul>${TREE.map((n) => html`<li><span class="rail r1"></span><span class="rail r2"></span>${n.node
          ? html`<button class="node" aria-label="Contraer"></button>`
          : html`<span class=${classMap({ rail: true, r3: true, half: !!n.last })}></span>`}<span class="dash"></span><span>${n.t}</span></li>`)}</ul>
        <div class="scroll">${chev("up")}<span class="thumbV v2"></span>${chev("down")}</div>
      </div>
      <div class="hbar">${chev("left")}<span class="thumbH"></span>${chev("right")}</div>`;
  }
}

@customElement("model-view")
export class ModelView extends LitElement {
  static styles = [reset, css`
    :host { display: flex; flex-direction: column; flex: 1; min-width: 0; }
    .docs { display: flex; height: 22px; padding-top: 2px; background: #cacaca; flex: none; }
    .doc { gap: 5px; padding: 0 20px 0 5px; white-space: nowrap; color: #444; }
    .current { background: #fff; padding: 0 1px 0 4px; font-weight: 600; color: #333; }
    .list { margin-left: auto; padding: 0 4px; }
    .stage { display: flex; flex: 1; min-height: 0; }
    .canvas { position: relative; flex: 1; min-width: 0; background: #fff; }
    .model { width: 100%; height: 100%; }
    .duct { fill: #7f7f7f; stroke: #1a16cc; stroke-width: 1px; vector-effect: non-scaling-stroke; }
    .edge { fill: none; stroke: #1a16cc; stroke-width: 1px; vector-effect: non-scaling-stroke; }
    .heavy { fill: none; stroke: #0f0bd0; stroke-width: 2px; vector-effect: non-scaling-stroke; }
    .unit { fill: #7b7b7b; stroke: #111; stroke-width: 1px; vector-effect: non-scaling-stroke; }
    .unitHeavy { fill: none; stroke: #111; stroke-width: 2px; vector-effect: non-scaling-stroke; }
    .leader { fill: none; stroke: #222; }
    .note { font: 5px "Liberation Sans", Arial, sans-serif; fill: #333; text-anchor: middle; }
    .pointer { fill: #fff; stroke: #222; }
    .cube { position: absolute; top: 37px; right: 14px; }
    .face { font: 16px "Liberation Sans", Arial, sans-serif; fill: #555; text-anchor: middle; }
    .nav { position: absolute; top: 119px; right: 1px; display: flex; flex-direction: column; align-items: center; width: 33px; height: 115px; padding: 2px 0; border: 2px solid #b3b3b3; border-radius: 5px; background: #f2f2f2; color: #777; }
    .nav .end { align-self: flex-end; margin-right: 2px; }
    .wheel { margin: 8px 0; }
    .rule { width: 25px; height: 1px; margin: 4px 0 8px; background: #bdbdbd; }
    .zoom { margin-bottom: 8px; }
    .nav .bottom { margin-top: auto; }
    .vscroll { display: flex; flex-direction: column; justify-content: space-between; align-items: center; width: 16px; padding: 6px 0 4px; background: #f0f0f0; }
    .vthumb { width: 14px; height: 16px; background: #cdcdcd; }
    .controls { display: flex; align-items: center; height: 18px; background: #f0f0f0; flex: none; }
    .scale { width: 75px; justify-content: center; padding-left: 6px; }
    .tools { display: flex; justify-content: space-between; width: 271px; }
    .track { flex: 1; display: flex; align-items: center; justify-content: space-between; padding: 0 20px 0 6px; }
    .hthumb { width: 16px; height: 14px; background: #cdcdcd; }
  `];
  render() {
    const docs: Array<[string, string]> = [["houseGray", "3D GENERAL Copia 1"], ["plan", "3 PLANTA ALTA Zonas"], ["sheet", "A101 - Sin nombre"]];
    const ringBtn = svg`<circle cx="4.500" cy="4.500" r="3.500" fill="#eee" stroke="#999" stroke-width="1.200"/>`;
    return html`
      <nav class="docs">
        ${docs.map(([i, t]) => html`<button class="doc">${icon(i)}${t}</button>`)}
        <button class="doc current">${icon("house")}${"3D isometrico hvac"}${icon("close")}</button>
        <button class="list" aria-label="Lista de vistas"><svg width="8" height="8" viewBox="0 0 8 8"><path d="M0 1h8" stroke="#333" stroke-width="1.200"/><path d="M0 3.500h8l-4 3.500z" fill="#333"/></svg></button>
      </nav>
      <div class="stage">
        <div class="canvas">
          <svg class="model" viewBox="206 188 1056 488" preserveAspectRatio="xMinYMin meet" role="img" aria-label="Isométrico HVAC">${ductwork()}</svg>
          <svg class="cube" width="90" height="73" viewBox="54 105 270 220" role="img" aria-label="ViewCube">
            <path d="M61 250A128 62 0 0 0 318 250 128 62 0 0 0 61 250ZM89 243A100 52 0 0 1 286 243 100 52 0 0 1 89 243Z" fill="#f4f4f4" fill-rule="evenodd" stroke="#b5b5b5" stroke-width="3" stroke-dasharray="14 5"/>
            <ellipse cx="180" cy="248" rx="72" ry="30" fill="#dedede"/>
            <ellipse cx="112" cy="294" rx="20" ry="12" fill="#eee" stroke="#b0b0b0" stroke-width="3"/>
            <ellipse cx="112" cy="294" rx="9" ry="6" fill="none" stroke="#b0b0b0" stroke-width="3"/>
            <path d="M85 198 115 206M98 190 102 212M275 270 312 282M282 282 302 268" stroke="#aaa" stroke-width="4"/>
            <path d="M121 146 181 113 257 135 203 169Z" fill="#f3f3f3" stroke="#777" stroke-width="3"/>
            <path d="M121 146 203 169 201 265 124 238Z" fill="#f0f0f0" stroke="#777" stroke-width="3"/>
            <path d="M203 169 257 135 252 230 201 265Z" fill="#dedede" stroke="#777" stroke-width="3"/>
            <g class="face"><text transform="translate(162 212) rotate(15)">IZQUIERDA</text><text transform="translate(229 210) rotate(-30)">NORTE</text><text transform="translate(192 147) rotate(-28)">SUP</text></g>
          </svg>
          <div class="nav">
            <button class="end" aria-label="Cerrar"><svg width="9" height="9" viewBox="0 0 9 9">${ringBtn}<path d="m3 3 3 3M6 3 3 6" stroke="#999"/></svg></button>
            <button class="wheel" aria-label="Rueda"><svg width="22" height="22" viewBox="0 0 22 22"><path d="M11 1h7q3 0 3 3v7a10 10 0 1 1-10-10z" fill="#f7f7f7" stroke="#8d959c" stroke-width="1.300"/><circle cx="11" cy="11" r="7.300" fill="#e6e9ec" stroke="#8d959c"/><circle cx="11" cy="11" r="4.800" fill="#f7fafc" stroke="#8d959c" stroke-width="1.200"/><path d="m5 16 3-2M17 16l-3-2" stroke="#8d959c"/></svg></button>
            <svg width="5" height="3" viewBox="0 0 7 4"><path d="M0 0h7L3.500 4z" fill="#888"/></svg>
            <span class="rule"></span>
            <button class="zoom" aria-label="Zoom"><svg width="16" height="16" viewBox="0 0 16 16"><path d="M.5.5h10v10H.5z" fill="#b9d8a8" stroke="#8bb277"/><circle cx="10" cy="10" r="3" fill="#f4f4f4" stroke="#888" stroke-width="1.300"/><path d="m12 12 3.500 3.500" stroke="#888" stroke-width="1.600"/></svg></button>
            <svg width="5" height="3" viewBox="0 0 7 4"><path d="M0 0h7L3.500 4z" fill="#888"/></svg>
            <button class="end bottom" aria-label="Opciones"><svg width="9" height="9" viewBox="0 0 9 9">${ringBtn}<path d="M3 4.500h3" stroke="#999"/></svg></button>
          </div>
        </div>
        <div class="vscroll">${chev("up")}<span class="vthumb"></span>${chev("down")}</div>
      </div>
      <div class="controls">
        <button class="scale">1 : 50</button>
        <div class="tools">${VIEW_TOOLS.map((t) => html`<button aria-label=${t}>${icon(t)}</button>`)}</div>
        <div class="track">${chev("left")}<span class="hthumb"></span>${chev("right")}</div>
      </div>`;
  }
}

@customElement("app-root")
export class AppRoot extends LitElement {
  static styles = css`
    :host { display: flex; flex-direction: column; height: 100vh; box-sizing: border-box; padding-right: 2px; background: #f6f6f6; overflow: hidden; font: 11px/15px "Open Sans", "Noto Sans", sans-serif; }
    .work { display: flex; flex: 1; min-height: 0; }
    .status { box-sizing: border-box; flex: none; height: 26px; background: #cacaca; border-bottom: 2px solid #111; }
  `;
  render() {
    return html`
      <title-bar></title-bar>
      <ribbon-bar></ribbon-bar>
      <main class="work"><side-palettes></side-palettes><model-view></model-view></main>
      <footer class="status"></footer>`;
  }
}
